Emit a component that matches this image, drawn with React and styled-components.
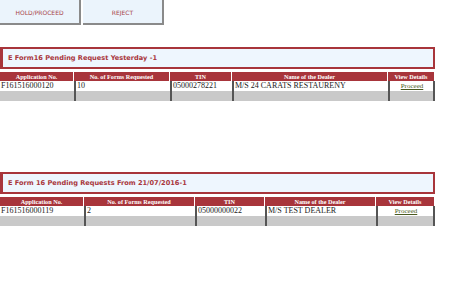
import React from "react";
import styled, { createGlobalStyle } from "styled-components";

const Global = createGlobalStyle`
  html, body { margin: 0; padding: 0; background: #fff; }
  body { font-family: "Liberation Serif", serif; }
`;

const Page = styled.div`
  width: 474px;
  height: 287px;
  overflow: hidden;
`;

const Toolbar = styled.div`
  display: flex;
  gap: 2px;
  height: 25px;
`;

const Button = styled.button`
  width: ${(p) => p.$w}px;
  height: 25px;
  margin: 0;
  padding: 2px 0 0 0;
  background: #ebf4fc;
  border: none;
  border-right: 2px solid #8a8a8a;
  border-bottom: 2px solid #8a8a8a;
  color: #a8444a;
  font-family: "DejaVu Sans", Verdana, sans-serif;
  font-size: 6px;
  text-transform: uppercase;
`;

const Section = styled.div`
  margin-top: ${(p) => p.$top}px;
  width: 435px;
`;

const Panel = styled.div`
  height: 18px;
  background: #eef6fe;
  border: 2px solid #a8353b;
  border-left-width: 3px;
  display: flex;
  align-items: center;
  padding-left: 5px;
  font-family: "DejaVu Sans", Verdana, sans-serif;
  font-weight: bold;
  font-size: 6.6px;
  color: #a8353b;
`;

const Table = styled.div`
  margin-top: 3px;
  display: grid;
  grid-template-columns: ${(p) => p.$cols};
`;

const Head = styled.div`
  background: #a8353b;
  color: #fff;
  font-family: "Liberation Serif", serif;
  font-weight: bold;
  font-size: 6.2px;
  height: 9px;
  line-height: 9px;
  text-align: center;
  border-right: 1px solid #fff;
  white-space: nowrap;
  overflow: hidden;
  &:last-child { border-right: none; }
`;

const Cell = styled.div`
  height: 10px;
  line-height: 10px;
  font-size: 8px;
  font-family: "Liberation Serif", serif;
  color: #1a1a1a;
  background: ${(p) => (p.$gray ? "#c9c9c9" : "#fff")};
  border-left: ${(p) => (p.$first ? "none" : "2px solid #555")};
  padding-left: 1px;
  text-align: ${(p) => (p.$center ? "center" : "left")};
  white-space: nowrap;
  overflow: hidden;
  &.last { border-right: 2px solid #555; }
`;

const Link = styled.a`
  color: #4a5a20;
  text-decoration: underline;
  font-size: 7px;
`;

const Headers = [
  "Application No.",
  "No. of Forms Requested",
  "TIN",
  "Name of the Dealer",
  "View Details",
];

function Report({ top, title, cols, row }) {
  return (
    <Section $top={top}>
      <Panel>{title}</Panel>
      <Table $cols={cols}>
        {Headers.map((h) => (
          <Head key={h}>{h}</Head>
        ))}
        {row.map((v, i) => (
          <Cell key={"a" + i} $first={i === 0} className={i === 4 ? "last" : ""} $center={i === 4}>
            {i === 4 ? <Link href="#">{v}</Link> : v}
          </Cell>
        ))}
        {row.map((v, i) => (
          <Cell key={"b" + i} $gray $first={i === 0} className={i === 4 ? "last" : ""} />
        ))}
      </Table>
    </Section>
  );
}

export default function App() {
  return (
    <Page>
      <Global />
      <Toolbar>
        <Button $w={81}>Hold/Proceed</Button>
        <Button $w={81}>Reject</Button>
      </Toolbar>
      <Report
        top={22}
        title="E Form16 Pending Request Yesterday -1"
        cols="74px 96px 62px 156px 47px"
        row={["F161516000120", "10", "05000278221", "M/S 24 CARATS RESTAURENY", "Proceed"]}
      />
      <Report
        top={71}
        title="E Form 16 Pending Requests From 21/07/2016-1"
        cols="84px 111px 70px 111px 59px"
        row={["F161516000119", "2", "05000000022", "M/S TEST DEALER", "Proceed"]}
      />
    </Page>
  );
}
